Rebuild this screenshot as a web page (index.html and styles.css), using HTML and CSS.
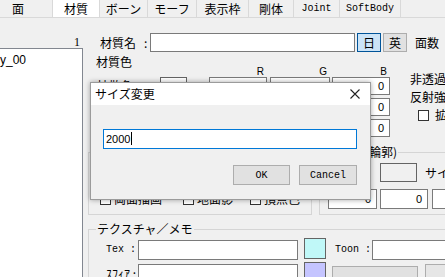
FILE: index.html
```html
<!DOCTYPE html>
<html lang="ja">
<head>
    <meta charset="UTF-8">
    <title>材質</title>
    <link rel="stylesheet" href="styles.css">
</head>
<body>
    <div class="tabs">
        <div class="tab tab-face">面</div>
        <div class="tab tab-active w47">材質</div>
        <div class="tab w48">ボーン</div>
        <div class="tab w49">モーフ</div>
        <div class="tab w52">表示枠</div>
        <div class="tab w45">剛体</div>
        <div class="tab w46 mono">Joint</div>
        <div class="tab w61 mono">SoftBody</div>
    </div>

    <div class="page">
        <div class="side">
            <div class="count">1</div>
            <div class="list">
                <div class="item">y_00</div>
            </div>
        </div>

        <div class="main">
            <div class="name-row">
                <span class="name-label">材質名<span class="colon">:</span></span>
                <div class="field name-field"></div>
                <button class="lang lang-on">日</button>
                <button class="lang">英</button>
                <span class="faces">面数</span>
            </div>

            <div class="color-title">材質色</div>
            <div class="color-block">
                <div class="color-grid">
                    <div class="rgb-head">
                        <span class="r">R</span><span class="g">G</span><span class="b">B</span>
                    </div>
                    <div class="color-row">
                        <span class="row-label">拡散色</span>
                        <span class="swatch"></span>
                        <span class="num r">0</span><span class="num g">0</span><span class="num b">0</span>
                    </div>
                    <div class="color-row">
                        <span class="row-label">反射色</span>
                        <span class="swatch"></span>
                        <span class="num r">0</span><span class="num g">0</span><span class="num b">0</span>
                    </div>
                    <div class="color-row">
                        <span class="row-label">環境色</span>
                        <span class="swatch"></span>
                        <span class="num r">0</span><span class="num g">0</span><span class="num b">0</span>
                    </div>
                </div>
                <div class="opts">
                    <div class="opt">非透過度</div>
                    <div class="opt">反射強度</div>
                    <div class="opt opt-check"><span class="box"></span>拡散</div>
                </div>
            </div>

            <div class="lower">
                <fieldset class="group draw-group">
                    <legend>描画</legend>
                    <div class="checks">
                        <span class="check c1"><span class="box"></span>両面描画</span>
                        <span class="check c2"><span class="box"></span>地面影</span>
                        <span class="check"><span class="box"></span>頂点色</span>
                    </div>
                </fieldset>
                <fieldset class="group edge-group">
                    <legend>エッジ(輪郭)</legend>
                    <div class="edge-top">
                        <span class="edge-color"></span>
                        <span class="edge-size">サイズ</span>
                    </div>
                    <div class="edge-nums">
                        <span class="num e1">0</span><span class="num e2">0</span><span class="num e3">0</span>
                    </div>
                </fieldset>
            </div>

            <fieldset class="group tex-group">
                <legend>テクスチャ／メモ</legend>
                <div class="tex-row">
                    <span class="tex-label mono">Tex :</span>
                    <div class="field tex-field"></div>
                    <span class="tex-swatch cyan"></span>
                    <span class="toon-label mono">Toon :</span>
                    <div class="field toon-field"></div>
                </div>
                <div class="tex-row row2">
                    <span class="tex-label">ｽﾌｨｱ :</span>
                    <div class="field tex-field"></div>
                    <span class="tex-swatch lavender"></span>
                    <span class="dropdown"></span>
                    <span class="tex-extra"></span>
                </div>
            </fieldset>
        </div>
    </div>

    <div class="dialog">
        <div class="dialog-title">
            <span>サイズ変更</span>
            <svg class="close" width="10" height="10" viewBox="0 0 10 10">
                <path d="M0.5 0.5 L9.5 9.5 M9.5 0.5 L0.5 9.5" stroke="#222" stroke-width="1.1" fill="none"/>
            </svg>
        </div>
        <div class="dialog-body">
            <div class="size-field">2000<span class="caret"></span></div>
            <div class="dialog-buttons">
                <button class="btn mono">OK</button>
                <button class="btn btn-cancel mono">Cancel</button>
            </div>
        </div>
    </div>
</body>
</html>
```

FILE: styles.css
```css
* {
    box-sizing: border-box;
}

body {
    margin: 0;
    width: 445px;
    height: 277px;
    overflow: hidden;
    position: relative;
    background: #f0f0f0;
    color: #000;
    font-family: "Noto Sans CJK JP", "Liberation Sans", sans-serif;
    font-size: 12px;
    line-height: 12px;
}

.mono {
    font-family: "Liberation Mono", monospace;
    font-size: 10px;
}

/* tab strip */
.tabs {
    display: flex;
    height: 18px;
    border-bottom: 1px solid #d9d9d9;
}

.tab {
    height: 17px;
    line-height: 17px;
    text-align: center;
    white-space: nowrap;
    border-right: 1px solid #d9d9d9;
}

.tab-face { width: 53px; text-align: left; padding-left: 12px; }
.tab-active { background: #fff; }
.w45 { width: 45px; }
.w46 { width: 46px; }
.w47 { width: 47px; }
.w48 { width: 48px; }
.w49 { width: 49px; }
.w52 { width: 52px; }
.w61 { width: 61px; }

.page {
    display: flex;
    width: 560px;
    height: 259px;
}

/* material list */
.side {
    width: 83px;
    display: flex;
    flex-direction: column;
}

.count {
    height: 30px;
    padding: 18px 3px 0 0;
    text-align: right;
    font-family: "Liberation Serif", serif;
}

.list {
    flex: 1;
    background: #fff;
    border-top: 1px solid #828790;
    border-right: 1px solid #828790;
}

.item {
    padding-top: 5px;
    font-family: "Liberation Sans", sans-serif;
    font-size: 12px;
}

.main {
    flex: 1;
    padding-left: 5px;
    display: flex;
    flex-direction: column;
}

.main > * {
    flex-shrink: 0;
}

.field {
    background: #fff;
    border: 1px solid #7a7a7a;
}

/* name row */
.name-row {
    display: flex;
    align-items: center;
    height: 19px;
    margin-top: 15px;
    padding-left: 12px;
}

.name-label {
    width: 50px;
}

.colon {
    margin-left: 8px;
}

.name-field {
    width: 205px;
    height: 19px;
}

.lang {
    width: 24px;
    height: 19px;
    margin-left: 2px;
    padding: 0;
    background: #e1e1e1;
    border: 1px solid #adadad;
    font-family: "Noto Sans CJK JP", sans-serif;
    font-size: 12px;
    line-height: 16px;
}

.lang-on {
    background: #cce4f7;
    border-color: #005499;
}

.faces {
    margin-left: 8px;
}

/* colors */
.color-title {
    margin-top: 4px;
    padding-left: 8px;
    line-height: 11px;
}

.color-block {
    display: flex;
}

.color-grid {
    width: 317px;
}

.rgb-head {
    display: flex;
    height: 10px;
    padding-left: 121px;
    font-family: "Liberation Sans", sans-serif;
    font-size: 10px;
    line-height: 10px;
}

.rgb-head span {
    text-align: right;
    padding-right: 3px;
}

.r { width: 58px; }
.g { width: 60px; margin-left: 3px; }
.b { width: 58px; margin-left: 2px; }

.color-row {
    display: flex;
    align-items: center;
    height: 18px;
    margin-bottom: 3px;
}

.row-label {
    width: 72px;
    padding-left: 9px;
}

.swatch {
    width: 27px;
    height: 18px;
    margin-right: 22px;
    background: #fff;
    border: 1px solid #646464;
}

.num {
    height: 18px;
    background: #fff;
    border: 1px solid #7a7a7a;
    text-align: right;
    padding-right: 5px;
    font-family: "Liberation Sans", sans-serif;
    font-size: 11px;
    line-height: 16px;
}

.opts {
    margin-left: 5px;
    padding-top: 6px;
    white-space: nowrap;
}

.opt {
    margin-bottom: 6px;
}

.opt-check {
    display: flex;
    align-items: center;
    padding-left: 8px;
}

.opt-check .box {
    margin-right: 6px;
}

.box {
    display: inline-block;
    width: 11px;
    height: 11px;
    background: #fff;
    border: 1px solid #333;
}

/* group boxes */
.group {
    margin: 0;
    padding: 0;
    min-width: 0;
    border: 1px solid #d5d5d5;
}

.group legend {
    padding: 0 1px;
    line-height: 12px;
}

.lower {
    display: flex;
    height: 69px;
    margin-top: 6px;
}

.draw-group {
    width: 224px;
}

.draw-group legend {
    margin-left: 7px;
}

.checks {
    display: flex;
    margin: 35px 0 0 11px;
}

.check {
    display: flex;
    align-items: center;
    gap: 3px;
    white-space: nowrap;
}

.c1 { width: 83px; }
.c2 { width: 67px; }

.edge-group {
    flex: 1;
    margin-left: 7px;
}

.edge-group legend {
    margin-left: 8px;
}

.edge-top {
    display: flex;
    align-items: center;
    margin-top: 5px;
    padding-left: 60px;
}

.edge-color {
    width: 37px;
    height: 19px;
    background: #f0f0f0;
    border: 1px solid #646464;
}

.edge-size {
    margin-left: 8px;
}

.edge-nums {
    display: flex;
    margin-top: 7px;
    padding-left: 8px;
}

.edge-nums .num { height: 20px; line-height: 18px; }
.e1 { width: 49px; }
.e2 { width: 48px; margin-left: 3px; }
.e3 { width: 50px; margin-left: 4px; }

/* texture */
.tex-group {
    margin-top: 8px;
    height: 60px;
}

.tex-group legend {
    margin-left: 7px;
}

.tex-row {
    display: flex;
    align-items: flex-start;
    margin-top: 5px;
}

.row2 {
    margin-top: 4px;
}

.tex-label {
    width: 49px;
    padding-right: 2px;
    text-align: right;
    line-height: 20px;
    white-space: nowrap;
}

.tex-field {
    width: 160px;
    height: 20px;
}

.tex-swatch {
    width: 22px;
    height: 21px;
    margin: -2px 0 0 6px;
    border: 1px solid #646464;
}

.cyan { background: #c0f8f8; }
.lavender { background: #c4c4ff; }

.toon-label {
    width: 37px;
    margin-left: 9px;
    line-height: 20px;
    white-space: nowrap;
}

.toon-field {
    width: 100px;
    height: 20px;
}

.dropdown {
    width: 86px;
    height: 22px;
    margin: 2px 0 0 6px;
    background: #e1e1e1;
    border: 1px solid #adadad;
}

.tex-extra {
    width: 40px;
    height: 22px;
    margin-left: 7px;
    background: #e6e6e6;
    border: 1px solid #adadad;
}

/* size dialog over the form */
.dialog {
    position: absolute;
    left: 90px;
    top: 82px;
    width: 281px;
    height: 118px;
    background: #f0f0f0;
    border: 1px solid #9b9b9b;
    box-shadow: 0 0 5px rgba(0, 0, 0, 0.35);
}

.dialog-title {
    display: flex;
    align-items: center;
    justify-content: space-between;
    height: 22px;
    padding: 0 10px 0 4px;
    background: #fff;
}

.dialog-body {
    padding: 24px 13px 0 12px;
}

.size-field {
    height: 20px;
    padding-left: 2px;
    background: #fff;
    border: 1px solid #0078d7;
    font-family: "Liberation Sans", sans-serif;
    font-size: 11px;
    line-height: 18px;
}

.caret {
    display: inline-block;
    width: 1px;
    height: 13px;
    margin-left: 1px;
    background: #000;
    vertical-align: -2px;
}

.dialog-buttons {
    display: flex;
    justify-content: flex-end;
    gap: 9px;
    margin-top: 16px;
}

.btn {
    width: 57px;
    height: 20px;
    padding: 0;
    background: #e1e1e1;
    border: 1px solid #adadad;
    color: #000;
}

.btn-cancel {
    width: 58px;
}
```
